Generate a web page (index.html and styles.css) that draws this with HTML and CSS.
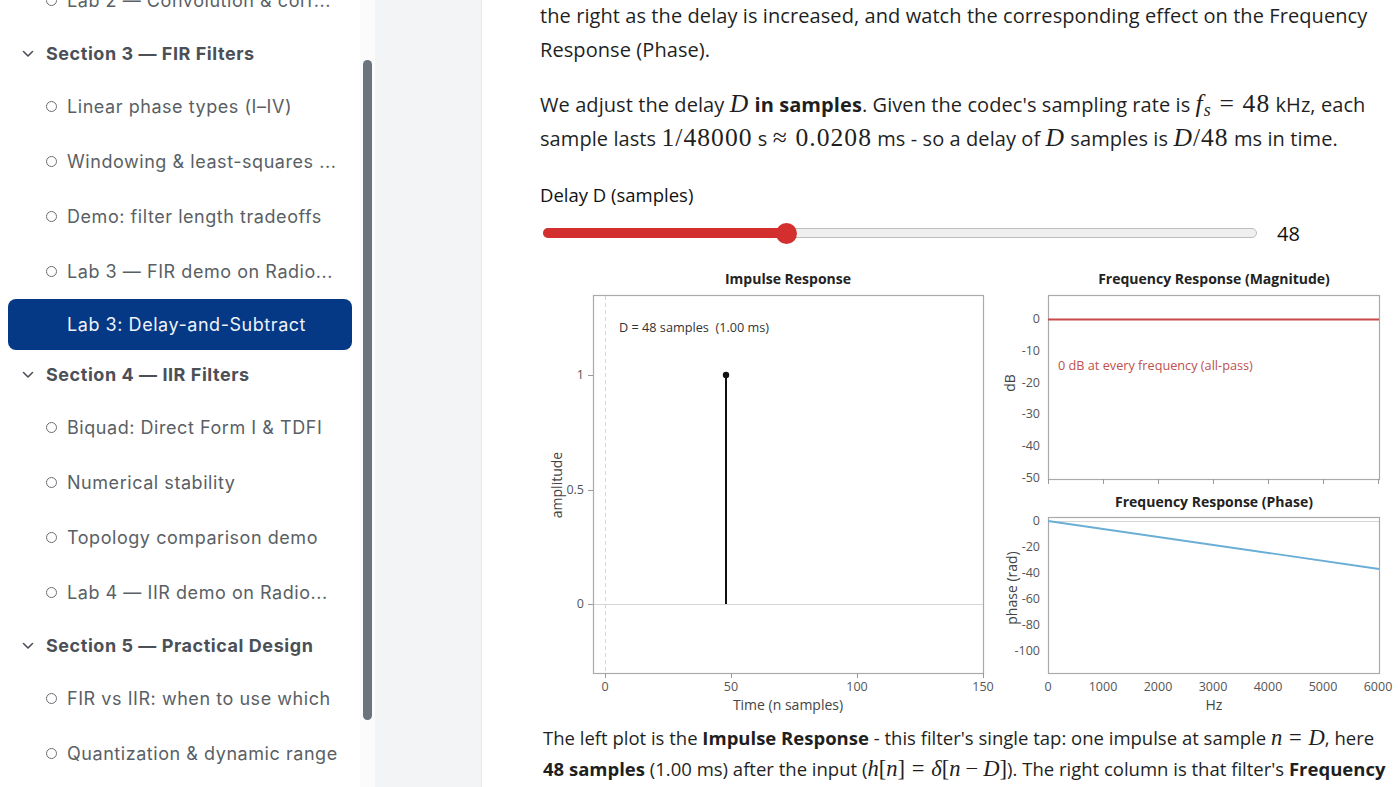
FILE: index.html
```html
<!DOCTYPE html>
<html lang="en">
<head>
<meta charset="utf-8">
<title>Lab 3: Delay-and-Subtract</title>
<link rel="stylesheet" href="styles.css">
</head>
<body>
<div class="app">
  <aside class="sidebar">
    <nav class="nav">
      <div class="item"><span class="bullet"></span><span>Lab 2 — Convolution &amp; corr...</span></div>
      <div class="section"><svg class="chev" width="12" height="8" viewBox="0 0 12 8"><path d="M1.5 1.5 L6 6 L10.5 1.5" fill="none" stroke="#4b5057" stroke-width="1.6" stroke-linecap="round" stroke-linejoin="round"/></svg><span>Section 3 — FIR Filters</span></div>
      <div class="item"><span class="bullet"></span><span>Linear phase types (I–IV)</span></div>
      <div class="item"><span class="bullet"></span><span>Windowing &amp; least-squares ...</span></div>
      <div class="item"><span class="bullet"></span><span>Demo: filter length tradeoffs</span></div>
      <div class="item"><span class="bullet"></span><span>Lab 3 — FIR demo on Radio...</span></div>
      <div class="item active"><span>Lab 3: Delay-and-Subtract</span></div>
      <div class="section"><svg class="chev" width="12" height="8" viewBox="0 0 12 8"><path d="M1.5 1.5 L6 6 L10.5 1.5" fill="none" stroke="#4b5057" stroke-width="1.6" stroke-linecap="round" stroke-linejoin="round"/></svg><span>Section 4 — IIR Filters</span></div>
      <div class="item"><span class="bullet"></span><span>Biquad: Direct Form I &amp; TDFI</span></div>
      <div class="item"><span class="bullet"></span><span>Numerical stability</span></div>
      <div class="item"><span class="bullet"></span><span>Topology comparison demo</span></div>
      <div class="item"><span class="bullet"></span><span>Lab 4 — IIR demo on Radio...</span></div>
      <div class="section"><svg class="chev" width="12" height="8" viewBox="0 0 12 8"><path d="M1.5 1.5 L6 6 L10.5 1.5" fill="none" stroke="#4b5057" stroke-width="1.6" stroke-linecap="round" stroke-linejoin="round"/></svg><span>Section 5 — Practical Design</span></div>
      <div class="item"><span class="bullet"></span><span>FIR vs IIR: when to use which</span></div>
      <div class="item"><span class="bullet"></span><span>Quantization &amp; dynamic range</span></div>
    </nav>
    <div class="scrolltrack"><div class="thumb"></div></div>
  </aside>
  <div class="gutter"></div>
  <main class="main">
    <p class="para first">the right as the delay is increased, and watch the corresponding effect on the Frequency<br>Response (Phase).</p>
    <p class="para">We adjust the delay <span class="m mi">D</span> <b>in samples</b>. Given the codec's sampling rate is <span class="m"><span class="mi">f</span><sub class="mi">s</sub><span class="rel">=</span>48</span> kHz, each<br>sample lasts <span class="m">1/48000</span> s <span class="m"><span class="rel lead">≈</span>0.0208</span> ms - so a delay of <span class="m mi">D</span> samples is <span class="m"><span class="mi">D</span>/48</span> ms in time.</p>

    <div class="control">
      <div class="ctl-label">Delay D (samples)</div>
      <div class="ctl-row">
        <div class="track">
          <div class="fill" style="width:242px"></div>
          <div class="knob" style="left:242px"></div>
        </div>
        <span class="ctl-val">48</span>
      </div>
    </div>

    <svg class="charts" width="860" height="458" viewBox="0 0 860 458">
      <!-- Impulse response -->
      <text class="ttl" x="248" y="22" text-anchor="middle">Impulse Response</text>
      <line x1="65.5" y1="34" x2="65.5" y2="411" stroke="#d8d8d8" stroke-dasharray="4 3"/>
      <line x1="54" y1="342.5" x2="443" y2="342.5" stroke="#d6d6d6"/>
      <rect x="53.5" y="33.5" width="390" height="378" fill="none" stroke="#aaaaaa" stroke-width="1.2"/>
      <line x1="48" y1="113.5" x2="53" y2="113.5" stroke="#999"/>
      <line x1="48" y1="228.5" x2="53" y2="228.5" stroke="#999"/>
      <line x1="48" y1="342.5" x2="53" y2="342.5" stroke="#999"/>
      <line x1="65.5" y1="411" x2="65.5" y2="416" stroke="#999"/>
      <line x1="191.5" y1="411" x2="191.5" y2="416" stroke="#999"/>
      <line x1="317.5" y1="411" x2="317.5" y2="416" stroke="#999"/>
      <line x1="443.5" y1="411" x2="443.5" y2="416" stroke="#999"/>
      <text class="tick" x="44" y="117" text-anchor="end">1</text>
      <text class="tick" x="44" y="232" text-anchor="end">0.5</text>
      <text class="tick" x="44" y="346" text-anchor="end">0</text>
      <text class="tick" x="65" y="429" text-anchor="middle">0</text>
      <text class="tick" x="191" y="429" text-anchor="middle">50</text>
      <text class="tick" x="317" y="429" text-anchor="middle">100</text>
      <text class="tick" x="443" y="429" text-anchor="middle">150</text>
      <line x1="186" y1="342" x2="186" y2="113" stroke="#111" stroke-width="2"/>
      <circle cx="186" cy="113" r="3.2" fill="#111"/>
      <text class="note" x="79" y="70">D = 48 samples  (1.00 ms)</text>
      <text class="axl" x="248" y="448" text-anchor="middle">Time (n samples)</text>
      <text class="axl" transform="translate(22 223) rotate(-90)" text-anchor="middle">amplitude</text>

      <!-- Magnitude -->
      <text class="ttl" x="674" y="22" text-anchor="middle">Frequency Response (Magnitude)</text>
      <rect x="508.5" y="33.5" width="331" height="184" fill="none" stroke="#aaaaaa" stroke-width="1.2"/>
      <line x1="508" y1="57.5" x2="839" y2="57.5" stroke="#c94a4a" stroke-width="2"/>
      <line x1="508.5" y1="217" x2="508.5" y2="222" stroke="#999"/>
      <line x1="563.5" y1="217" x2="563.5" y2="222" stroke="#999"/>
      <line x1="618.5" y1="217" x2="618.5" y2="222" stroke="#999"/>
      <line x1="673.5" y1="217" x2="673.5" y2="222" stroke="#999"/>
      <line x1="728.5" y1="217" x2="728.5" y2="222" stroke="#999"/>
      <line x1="783.5" y1="217" x2="783.5" y2="222" stroke="#999"/>
      <line x1="838.5" y1="217" x2="838.5" y2="222" stroke="#999"/>
      <text class="tick" x="500" y="61" text-anchor="end">0</text>
      <text class="tick" x="500" y="93" text-anchor="end">-10</text>
      <text class="tick" x="500" y="125" text-anchor="end">-20</text>
      <text class="tick" x="500" y="156" text-anchor="end">-30</text>
      <text class="tick" x="500" y="188" text-anchor="end">-40</text>
      <text class="tick" x="500" y="220" text-anchor="end">-50</text>
      <text class="note red" x="518" y="108">0 dB at every frequency (all-pass)</text>
      <text class="axl" transform="translate(475 121) rotate(-90)" text-anchor="middle">dB</text>

      <!-- Phase -->
      <text class="ttl" x="674" y="245" text-anchor="middle">Frequency Response (Phase)</text>
      <line x1="509" y1="259.5" x2="839" y2="259.5" stroke="#d6d6d6"/>
      <rect x="508.5" y="255.5" width="331" height="156" fill="none" stroke="#aaaaaa" stroke-width="1.2"/>
      <line x1="508" y1="259" x2="839" y2="307" stroke="#6aaed6" stroke-width="1.8"/>
      <text class="tick" x="500" y="263" text-anchor="end">0</text>
      <text class="tick" x="500" y="289" text-anchor="end">-20</text>
      <text class="tick" x="500" y="315" text-anchor="end">-40</text>
      <text class="tick" x="500" y="341" text-anchor="end">-60</text>
      <text class="tick" x="500" y="367" text-anchor="end">-80</text>
      <text class="tick" x="500" y="393" text-anchor="end">-100</text>
      <text class="tick" x="508" y="429" text-anchor="middle">0</text>
      <text class="tick" x="563" y="429" text-anchor="middle">1000</text>
      <text class="tick" x="618" y="429" text-anchor="middle">2000</text>
      <text class="tick" x="673" y="429" text-anchor="middle">3000</text>
      <text class="tick" x="728" y="429" text-anchor="middle">4000</text>
      <text class="tick" x="783" y="429" text-anchor="middle">5000</text>
      <text class="tick" x="838" y="429" text-anchor="middle">6000</text>
      <text class="axl" x="674" y="448" text-anchor="middle">Hz</text>
      <text class="axl" transform="translate(477 326) rotate(-90)" text-anchor="middle">phase (rad)</text>
    </svg>

    <p class="para small">The left plot is the <b>Impulse Response</b> - this filter's single tap: one impulse at sample <span class="m"><span class="mi">n</span><span class="rel">=</span><span class="mi">D</span></span>, here<br><b>48 samples</b> (1.00 ms) after the input (<span class="m"><span class="mi">h</span>[<span class="mi">n</span>]<span class="rel">=</span><span class="mi">δ</span>[<span class="mi">n</span><span class="bin">−</span><span class="mi">D</span>]</span>). The right column is that filter's <b>Frequency</b></p>
  </main>
</div>
</body>
</html>
```

FILE: styles.css
```css
* { box-sizing: border-box; }
html, body { margin: 0; padding: 0; }
body {
  width: 1400px;
  height: 787px;
  overflow: hidden;
  background: #ffffff;
  font-family: "Open Sans", "Liberation Sans", sans-serif;
  color: #1f1f1f;
}
.app {
  display: flex;
  height: 787px;
}

/* Sidebar */
.sidebar {
  width: 375px;
  flex: none;
  display: flex;
  background: #ffffff;
  overflow: hidden;
}
.nav {
  width: 360px;
  flex: none;
  margin-top: -27px;
  font-family: "Inter", "Noto Sans", sans-serif;
  font-size: 18px;
  letter-spacing: 0.55px;
}
.item {
  height: 55px;
  display: flex;
  align-items: center;
  padding-left: 46px;
  color: #5a5f65;
  white-space: nowrap;
}
.bullet {
  width: 11px;
  height: 11px;
  border: 1.5px solid #6a6e73;
  border-radius: 50%;
  margin-right: 10px;
  flex: none;
}
.item.active {
  height: 51px;
  margin: 0 8px;
  padding-left: 59px;
  background: #053885;
  color: #eef2f9;
  border-radius: 8px;
}
.section {
  height: 51px;
  display: flex;
  align-items: center;
  padding-left: 22px;
  font-weight: 700;
  color: #4b5057;
  white-space: nowrap;
}
.section + .item { margin-top: 0; }
.item.active + .section { margin-top: -1px; }
.chev { margin-right: 12px; flex: none; }

.scrolltrack {
  width: 15px;
  flex: none;
  padding: 60px 3px 0 3px;
  background: #fbfbfc;
}
.thumb {
  width: 9px;
  height: 660px;
  background: #6b737c;
  border-radius: 5px;
}

.gutter {
  width: 106px;
  flex: none;
  background: #f3f4f6;
}

/* Main */
.main {
  flex: 1;
  border-left: 1px solid #e6e8eb;
  padding: 0 8px 0 58px;
  overflow: hidden;
}
.para {
  margin: 21px 0 0 0;
  font-size: 20px;
  line-height: 34px;
  letter-spacing: 0.08px;
  white-space: nowrap;
}
.para.first { margin-top: -1px; }
.para b { font-weight: 700; }
.m {
  font-family: "Liberation Serif", "DejaVu Serif", serif;
  font-size: 1.28em;
  letter-spacing: 0.04em;
  line-height: 1;
}
.mi { font-style: italic; }
.m sub { font-size: 0.7em; vertical-align: -0.25em; }
.rel { margin: 0 0.3em; }
.rel.lead { margin-left: 0; }
.bin { margin: 0 0.222em; }

.control { margin-top: 27px; }
.ctl-label {
  font-size: 18.5px;
  line-height: 24px;
  color: #111;
}
.ctl-row {
  margin-top: 14px;
  height: 24px;
  display: flex;
  align-items: center;
}
.track {
  position: relative;
  width: 714px;
  height: 10px;
  margin-left: 3px;
  background: #efefef;
  border: 1px solid #bdbdbd;
  border-radius: 5px;
}
.fill {
  height: 10px;
  margin: -1px 0 0 -1px;
  background: #d32f2f;
  border-radius: 5px 0 0 5px;
}
.knob {
  position: absolute;
  top: 50%;
  width: 21px;
  height: 21px;
  margin: -10.5px 0 0 -10.5px;
  background: #d32f2f;
  border-radius: 50%;
}
.ctl-val {
  margin-left: 20px;
  font-size: 20px;
  color: #111;
}

.charts {
  display: block;
  margin-top: 17px;
  font-family: "Open Sans", "Noto Sans", sans-serif;
}
.ttl { font-size: 14px; font-weight: 700; fill: #222; }
.tick { font-size: 12.5px; fill: #555; }
.axl { font-size: 14px; fill: #444; }
.note { font-size: 12.7px; fill: #333; white-space: pre; }
.note.red { fill: #c0504d; }

.para.small {
  margin: 2px 0 0 3px;
  font-size: 18.5px;
  line-height: 31px;
  letter-spacing: 0;
}
.para.small .m { font-size: 1.22em; letter-spacing: 0; }
```
